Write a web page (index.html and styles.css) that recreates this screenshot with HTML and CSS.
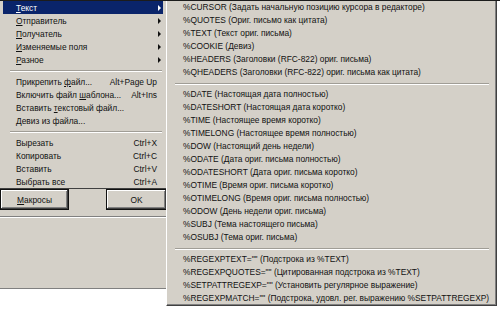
FILE: index.html
```html
<!DOCTYPE html>
<html>
  <head>
    <meta charset="utf-8">
    <title>Меню шаблона</title>
    <link rel="stylesheet" href="styles.css">
  </head>
  <body>
    <div class="screen">
      <div class="left">
        <ul class="menu">
          <li class="item active"><span class="label"><u>Т</u>екст</span><span class="arrow"></span></li>
          <li class="item"><span class="label"><u>О</u>тправитель</span><span class="arrow"></span></li>
          <li class="item"><span class="label"><u>П</u>олучатель</span><span class="arrow"></span></li>
          <li class="item"><span class="label"><u>И</u>зменяемые поля</span><span class="arrow"></span></li>
          <li class="item"><span class="label"><u>Р</u>азное</span><span class="arrow"></span></li>
          <li class="sep"></li>
          <li class="item"><span class="label">Прикрепить <u>ф</u>айл...</span><span class="key">Alt+Page Up</span></li>
          <li class="item"><span class="label">Включить файл <u>ш</u>аблона...</span><span class="key">Alt+Ins</span></li>
          <li class="item"><span class="label">Вставить <u>т</u>екстовый файл...</span></li>
          <li class="item"><span class="label"><u>Д</u>евиз из файла...</span></li>
          <li class="sep"></li>
          <li class="item"><span class="label">Вырезать</span><span class="key">Ctrl+X</span></li>
          <li class="item"><span class="label">Копировать</span><span class="key">Ctrl+C</span></li>
          <li class="item"><span class="label">Вставить</span><span class="key">Ctrl+V</span></li>
          <li class="item"><span class="label">Выбрать все</span><span class="key">Ctrl+A</span></li>
        </ul>
        <div class="buttons">
          <button class="btn macros"><u>М</u>акросы</button>
          <button class="btn ok">OK</button>
        </div>
        <div class="panel"><div class="panel-rule"></div></div>
      </div>

      <ul class="submenu">
        <li class="item">%CURSOR (Задать начальную позицию курсора в редакторе)</li>
        <li class="item">%QUOTES (Ориг. письмо как цитата)</li>
        <li class="item">%TEXT (Текст ориг. письма)</li>
        <li class="item">%COOKIE (Девиз)</li>
        <li class="item">%HEADERS (Заголовки (RFC-822) ориг. письма)</li>
        <li class="item">%QHEADERS (Заголовки (RFC-822) ориг. письма как цитата)</li>
        <li class="sep"></li>
        <li class="item">%DATE (Настоящая дата полностью)</li>
        <li class="item">%DATESHORT (Настоящая дата коротко)</li>
        <li class="item">%TIME (Настоящее время коротко)</li>
        <li class="item">%TIMELONG (Настоящее время полностью)</li>
        <li class="item">%DOW (Настоящий день недели)</li>
        <li class="item">%ODATE (Дата ориг. письма полностью)</li>
        <li class="item">%ODATESHORT (Дата ориг. письма коротко)</li>
        <li class="item">%OTIME (Время ориг. письма коротко)</li>
        <li class="item">%OTIMELONG (Время ориг. письма полностью)</li>
        <li class="item">%ODOW (День недели ориг. письма)</li>
        <li class="item">%SUBJ (Тема настоящего письма)</li>
        <li class="item">%OSUBJ (Тема ориг. письма)</li>
        <li class="sep"></li>
        <li class="item">%REGEXPTEXT="" (Подстрока из %TEXT)</li>
        <li class="item">%REGEXPQUOTES="" (Цитированная подстрока из %TEXT)</li>
        <li class="item">%SETPATTREGEXP="" (Установить регулярное выражение)</li>
        <li class="item">%REGEXPMATCH="" (Подстрока, удовл. рег. выражению %SETPATTREGEXP)</li>
      </ul>
    </div>
  </body>
</html>
```

FILE: styles.css
```css
body { margin: 0; background: #fff; font-family: "Liberation Sans", Arial, sans-serif; font-size: 8.4px; color: #111; }
u { text-decoration: underline; text-underline-offset: 1px; }

.screen { display: flex; align-items: flex-start; height: 308px; border-top: 1px solid #1c1c1c; }

/* main popup menu */
.left { width: 166px; flex-shrink: 0; display: flex; flex-direction: column; }
.menu { list-style: none; margin: 0; padding: 0 3px; height: 187px; background: #d4d0c8; }
.menu .item { display: flex; align-items: center; height: 13px; padding: 0 1px 0 13px; }
.menu .item.active { background: #0a246a; color: #fff; }
.menu .key { margin-left: auto; margin-right: 5px; }
.arrow { margin-left: auto; width: 0; height: 0; border-left: 3px solid #111; border-top: 3px solid transparent; border-bottom: 3px solid transparent; margin-right: 1px; }
.active .arrow { border-left-color: #fff; }

.sep { height: 9px; display: flex; align-items: center; }
.sep::before { content: ""; flex: 1; border-top: 1px solid #a09d96; border-bottom: 1px solid #fff; }
.menu .sep { padding: 0 1px 0 7px; }

/* dialog behind the menu */
.buttons { display: flex; justify-content: space-between; height: 22px; background: #d4d0c8; border-top: 1px solid #404040; box-sizing: border-box; }
.btn { font: inherit; color: #111; background: #d4d0c8; border: 1px solid #111; padding: 0; box-shadow: inset -1px -1px #404040, inset 1px 1px #fff, inset -2px -2px #808080; }
.macros { width: 69px; }
.ok { width: 60px; border-right: 0; }

.panel { height: 78px; background: #d4d0c8; border-bottom: 1px solid #808080; }
.panel-rule { margin-top: 6px; border-top: 1px solid #808080; border-bottom: 1px solid #fff; }

/* submenu */
.submenu { list-style: none; margin: 0; padding: 0; width: 331px; box-sizing: border-box; background: #d4d0c8; border-left: 1px solid #fff; border-right: 1px solid #404040; border-bottom: 1px solid #404040; box-shadow: inset -1px -1px #808080; }
.submenu .item { height: 13px; line-height: 13px; padding-left: 16px; white-space: nowrap; }
.submenu .sep { padding: 0 7px 0 8px; }
```
